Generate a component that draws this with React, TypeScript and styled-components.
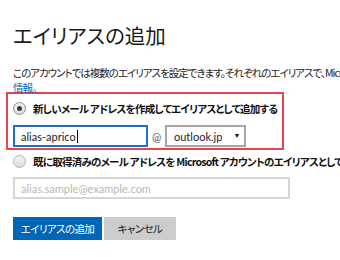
import React from 'react';
import styled, { createGlobalStyle } from 'styled-components';

const GlobalStyle = createGlobalStyle`
  html, body {
    margin: 0;
    padding: 0;
    background: #ffffff;
  }
  body {
    font-family: "Noto Sans CJK JP", sans-serif;
    font-feature-settings: "palt";
    color: #000;
  }
`;

const Page = styled.div`
  width: 340px;
  height: 260px;
  overflow: hidden;
  padding: 21px 0 0 13px;
  box-sizing: border-box;
`;

const Title = styled.h1`
  font-family: "Noto Sans CJK JP", sans-serif;
  font-size: 20.5px;
  font-weight: 400;
  line-height: 28px;
  margin: 0 0 16px;
  color: #1a1a1a;
`;

const Description = styled.p`
  font-family: "Noto Sans CJK JP", sans-serif;
  font-size: 10.5px;
  letter-spacing: -1px;
  line-height: 15px;
  margin: 0;
  white-space: nowrap;
  color: #222;
`;

const InfoLink = styled.a`
  color: #0067b8;
  text-decoration: none;
`;

const Highlight = styled.div`
  margin: -3px 0 0 -7px;
  width: 278px;
  box-sizing: border-box;
  border: 2px solid #e8434a;
  padding: 5px 5px 1px;
`;

const OptionRow = styled.div`
  display: flex;
  align-items: center;
  gap: 7px;
  height: 18px;
  white-space: nowrap;
`;

const Radio = styled.span<{ $checked?: boolean }>`
  width: 13px;
  height: 13px;
  box-sizing: border-box;
  border-radius: 50%;
  border: 1px solid ${p => (p.$checked ? '#8c8c8c' : '#b4b4b4')};
  background: linear-gradient(#f4f4f4, #dcdcdc);
  display: flex;
  align-items: center;
  justify-content: center;
  flex-shrink: 0;

  &::after {
    content: '';
    display: ${p => (p.$checked ? 'block' : 'none')};
    width: 5px;
    height: 5px;
    border-radius: 50%;
    background: #3c3c3c;
  }
`;

const OptionLabel = styled.span`
  font-family: "Noto Sans CJK JP", sans-serif;
  font-size: 10.5px;
  letter-spacing: -0.75px;
  font-weight: 700;
  color: #111;
`;

const FieldRow = styled.div`
  display: flex;
  align-items: center;
  margin-top: 8px;
`;

const TextBox = styled.div<{ $width: number; $focused?: boolean }>`
  width: ${p => p.$width}px;
  height: 22px;
  box-sizing: border-box;
  border: 2px solid ${p => (p.$focused ? '#1f6fc5' : '#d6d6d6')};
  background: #fff;
  display: flex;
  align-items: center;
  padding-left: 6px;
  font-family: "Lato", "Noto Sans", sans-serif;
  font-size: 11px;
  color: #222;
`;

const Placeholder = styled.span`
  color: #b8b8b8;
`;

const Caret = styled.span`
  display: inline-block;
  width: 1px;
  height: 13px;
  background: #000;
  margin-left: 1px;
`;

const AtSign = styled.span`
  width: 17px;
  text-align: center;
  font-family: "Lato", "Noto Sans", sans-serif;
  font-size: 11px;
  color: #555;
`;

const Select = styled.div`
  width: 81px;
  height: 22px;
  box-sizing: border-box;
  border: 2px solid #a6a6a6;
  display: flex;
  align-items: center;
  justify-content: space-between;
  padding: 0 5px 0 7px;
  font-family: "Lato", "Noto Sans", sans-serif;
  font-size: 11px;
  color: #222;
`;

const Arrow = styled.span`
  width: 0;
  height: 0;
  border-left: 2.5px solid transparent;
  border-right: 2.5px solid transparent;
  border-top: 4px solid #111;
`;

const SecondOption = styled(OptionRow)`
  height: 22px;
`;

const SecondField = styled.div`
  margin-top: 5px;
`;

const ButtonBar = styled.div`
  display: flex;
  gap: 2px;
  margin-top: 18px;
`;

const Button = styled.button<{ $primary?: boolean }>`
  height: 23px;
  border: none;
  padding: 0;
  white-space: nowrap;
  font-family: "Noto Sans CJK JP", sans-serif;
  font-feature-settings: "palt";
  font-size: 10.5px;
  letter-spacing: -0.6px;
  background: ${p => (p.$primary ? '#0067b8' : '#cccccc')};
  color: ${p => (p.$primary ? '#ffffff' : '#222222')};
  width: ${p => (p.$primary ? 89 : 72)}px;
`;

export default function App() {
  return (
    <>
      <GlobalStyle />
      <Page>
        <Title>エイリアスの追加</Title>
        <Description>
          このアカウントでは複数のエイリアスを設定できます。それぞれのエイリアスで、Microsoft アカウントのサインインが可能です。
          <br />
          <InfoLink href="#">情報。</InfoLink>
        </Description>

        <Highlight>
          <OptionRow>
            <Radio $checked />
            <OptionLabel>新しいメール アドレスを作成してエイリアスとして追加する</OptionLabel>
          </OptionRow>
          <FieldRow>
            <TextBox $width={135} $focused>
              alias-aprico
              <Caret />
            </TextBox>
            <AtSign>@</AtSign>
            <Select>
              outlook.jp
              <Arrow />
            </Select>
          </FieldRow>
        </Highlight>

        <SecondOption>
          <Radio />
          <OptionLabel>既に取得済みのメール アドレスを Microsoft アカウントのエイリアスとして追加する</OptionLabel>
        </SecondOption>
        <SecondField>
          <TextBox $width={277}>
            <Placeholder>alias.sample@example.com</Placeholder>
          </TextBox>
        </SecondField>

        <ButtonBar>
          <Button $primary>エイリアスの追加</Button>
          <Button>キャンセル</Button>
        </ButtonBar>
      </Page>
    </>
  );
}
